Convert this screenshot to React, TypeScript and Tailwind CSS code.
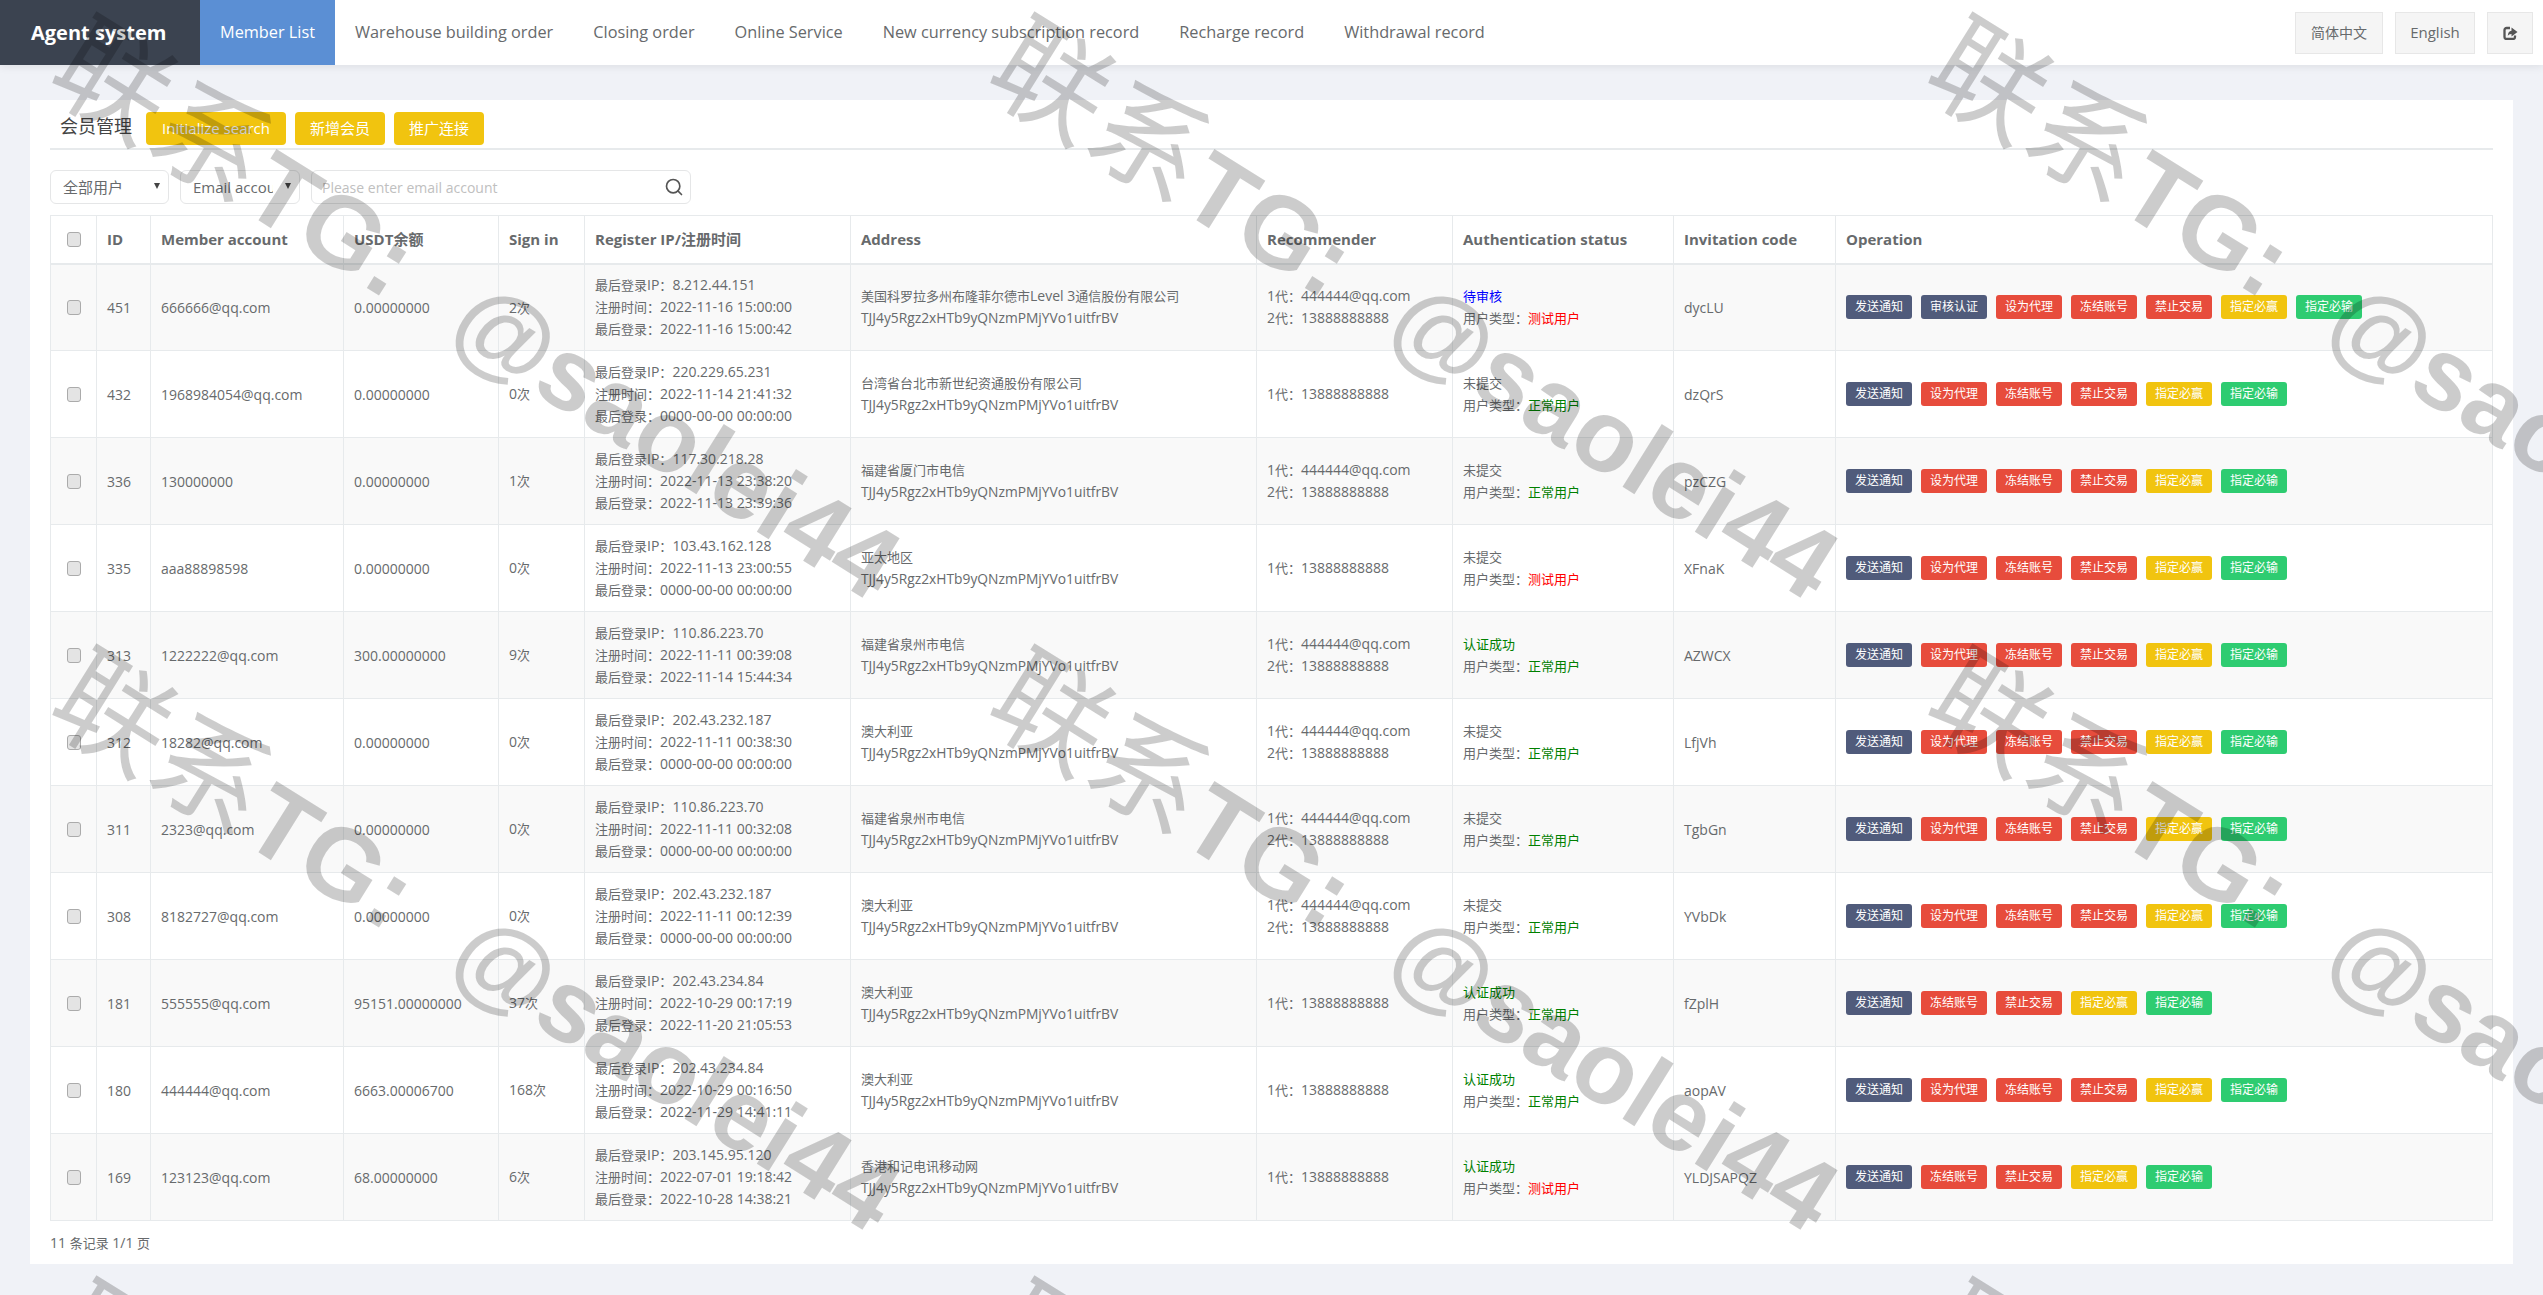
import React from 'react';
import { Search } from 'lucide-react';

const FONT = "font-['Open_Sans','Noto_Sans_CJK_SC',sans-serif]";

type Row = {
  id: number;
  account: string;
  usdt: string;
  sign: string;
  ip: string;
  reg: string;
  last: string;
  addr: string;
  rec: string[];
  auth: 'wait' | 'none' | 'ok';
  test: boolean;
  code: string;
  ops: string[];
};

const normal = ['发送通知', '设为代理', '冻结账号', '禁止交易', '指定必赢', '指定必输'];
const noAgent = ['发送通知', '冻结账号', '禁止交易', '指定必赢', '指定必输'];

const rows: Row[] = [
  { id: 451, account: '666666@qq.com', usdt: '0.00000000', sign: '2次', ip: '8.212.44.151', reg: '2022-11-16 15:00:00', last: '2022-11-16 15:00:42', addr: '美国科罗拉多州布隆菲尔德市Level 3通信股份有限公司', rec: ['1代：444444@qq.com', '2代：13888888888'], auth: 'wait', test: true, code: 'dycLU', ops: ['发送通知', '审核认证', '设为代理', '冻结账号', '禁止交易', '指定必赢', '指定必输'] },
  { id: 432, account: '1968984054@qq.com', usdt: '0.00000000', sign: '0次', ip: '220.229.65.231', reg: '2022-11-14 21:41:32', last: '0000-00-00 00:00:00', addr: '台湾省台北市新世纪资通股份有限公司', rec: ['1代：13888888888'], auth: 'none', test: false, code: 'dzQrS', ops: normal },
  { id: 336, account: '130000000', usdt: '0.00000000', sign: '1次', ip: '117.30.218.28', reg: '2022-11-13 23:38:20', last: '2022-11-13 23:39:36', addr: '福建省厦门市电信', rec: ['1代：444444@qq.com', '2代：13888888888'], auth: 'none', test: false, code: 'pzCZG', ops: normal },
  { id: 335, account: 'aaa88898598', usdt: '0.00000000', sign: '0次', ip: '103.43.162.128', reg: '2022-11-13 23:00:55', last: '0000-00-00 00:00:00', addr: '亚太地区', rec: ['1代：13888888888'], auth: 'none', test: true, code: 'XFnaK', ops: normal },
  { id: 313, account: '1222222@qq.com', usdt: '300.00000000', sign: '9次', ip: '110.86.223.70', reg: '2022-11-11 00:39:08', last: '2022-11-14 15:44:34', addr: '福建省泉州市电信', rec: ['1代：444444@qq.com', '2代：13888888888'], auth: 'ok', test: false, code: 'AZWCX', ops: normal },
  { id: 312, account: '18282@qq.com', usdt: '0.00000000', sign: '0次', ip: '202.43.232.187', reg: '2022-11-11 00:38:30', last: '0000-00-00 00:00:00', addr: '澳大利亚', rec: ['1代：444444@qq.com', '2代：13888888888'], auth: 'none', test: false, code: 'LfjVh', ops: normal },
  { id: 311, account: '2323@qq.com', usdt: '0.00000000', sign: '0次', ip: '110.86.223.70', reg: '2022-11-11 00:32:08', last: '0000-00-00 00:00:00', addr: '福建省泉州市电信', rec: ['1代：444444@qq.com', '2代：13888888888'], auth: 'none', test: false, code: 'TgbGn', ops: normal },
  { id: 308, account: '8182727@qq.com', usdt: '0.00000000', sign: '0次', ip: '202.43.232.187', reg: '2022-11-11 00:12:39', last: '0000-00-00 00:00:00', addr: '澳大利亚', rec: ['1代：444444@qq.com', '2代：13888888888'], auth: 'none', test: false, code: 'YVbDk', ops: normal },
  { id: 181, account: '555555@qq.com', usdt: '95151.00000000', sign: '37次', ip: '202.43.234.84', reg: '2022-10-29 00:17:19', last: '2022-11-20 21:05:53', addr: '澳大利亚', rec: ['1代：13888888888'], auth: 'ok', test: false, code: 'fZplH', ops: noAgent },
  { id: 180, account: '444444@qq.com', usdt: '6663.00006700', sign: '168次', ip: '202.43.234.84', reg: '2022-10-29 00:16:50', last: '2022-11-29 14:41:11', addr: '澳大利亚', rec: ['1代：13888888888'], auth: 'ok', test: false, code: 'aopAV', ops: normal },
  { id: 169, account: '123123@qq.com', usdt: '68.00000000', sign: '6次', ip: '203.145.95.120', reg: '2022-07-01 19:18:42', last: '2022-10-28 14:38:21', addr: '香港和记电讯移动网', rec: ['1代：13888888888'], auth: 'ok', test: true, code: 'YLDJSAPQZ', ops: noAgent },
];

const navItems = ['Warehouse building order', 'Closing order', 'Online Service', 'New currency subscription record', 'Recharge record', 'Withdrawal record'];

function opColor(label: string) {
  if (label === '发送通知' || label === '审核认证') return 'bg-[#505b7b]';
  if (label === '指定必赢') return 'bg-[#f1c40f]';
  if (label === '指定必输') return 'bg-[#2ecc71]';
  return 'bg-[#e74c3c]';
}

// the cells run latin at 14px and chinese at 13px
function Mix({ text }: { text: string }) {
  const parts = text.split(/([\u3000-\u9fff\uff00-\uffef]+)/);
  return (
    <>
      {parts.map((p, i) => (i % 2 === 1 ? <span key={i} className="text-[13px]">{p}</span> : p))}
    </>
  );
}

function Check() {
  return <input type="checkbox" className="block h-[15px] w-[14px] appearance-none rounded-[3px] border border-[#ababab] bg-[#e4e4e4]" />;
}

function SelectBox({ label, width }: { label: string; width: string }) {
  return (
    <div className={`relative h-[34px] ${width}`}>
      <select className="h-[34px] w-full appearance-none rounded-[6px] border border-[#e5e6e7] bg-white pl-[12px] pr-[26px] text-[15px] outline-none">
        <option>{label}</option>
      </select>
      <span className="pointer-events-none absolute right-[9px] top-[13px] h-0 w-0 border-x-[3px] border-t-[6px] border-x-transparent border-t-[#444]" />
    </div>
  );
}

function ExitIcon() {
  return (
    <svg viewBox="0 0 15 14" className="h-[14px] w-[15px] text-[#555]">
      <path d="M7 2H3.6A2.1 2.1 0 0 0 1.5 4.1v6.8A2.1 2.1 0 0 0 3.6 13h6.3A2.1 2.1 0 0 0 12 10.9V9.5" fill="none" stroke="currentColor" strokeWidth="2.3" />
      <path d="M8.5 1.5 14.5 6 8.5 10.5V8C6.5 8 5.4 8.8 4.8 10 4.8 7.2 6.2 4.9 8.5 4.8Z" fill="currentColor" />
    </svg>
  );
}

function Watermark() {
  const tiles = Array.from({ length: 12 });
  return (
    <div className="pointer-events-none absolute inset-0 overflow-hidden">
      <div className="grid w-[3752px] grid-cols-[repeat(4,938px)] auto-rows-[632px]">
        {tiles.map((_, i) => (
          <div key={i} className="relative h-[632px] w-[938px]">
            <div className="absolute left-[478px] top-[311px] -translate-x-1/2 -translate-y-1/2 rotate-[32deg] whitespace-nowrap text-[102px] leading-none text-black/20 font-bold [word-spacing:40px] font-['Liberation_Sans','Noto_Sans_CJK_SC',sans-serif]">
              <span className="text-[115px] font-normal">联系</span>TG: @saolei44
            </div>
          </div>
        ))}
      </div>
    </div>
  );
}

const thClass = 'border border-[#e7eaec] border-b-2 px-[10px] text-left align-middle text-[15px] font-bold text-[#676a6c]';
const tdClass = 'h-[87px] border border-[#e7eaec] px-[10px] py-0 align-middle';

export default function App() {
  return (
    <div className={`relative h-[1295px] w-full overflow-hidden bg-[#f0f2f7] text-[14px] text-[#676a6c] ${FONT}`}>
      <div className="flex h-[65px] items-stretch bg-white shadow-[0_2px_8px_rgba(0,0,0,0.08)]">
        <div className="flex w-[200px] items-center bg-[#3b4350] pl-[31px] text-[20px] font-bold text-white">Agent system</div>
        <div className="flex w-[135px] items-center justify-center bg-[#5b8fd4] text-[16.3px] text-white">Member List</div>
        {navItems.map((n) => (
          <div key={n} className="flex items-center px-[20px] text-[16.3px] text-[#676a6c]">{n}</div>
        ))}
        <div className="ml-auto flex items-center gap-[12px] pr-[10px] text-[15px]">
          <div className="flex h-[42px] w-[88px] items-center justify-center border border-[#e7e7e7] bg-[#f5f5f5] text-[14px]">简体中文</div>
          <div className="flex h-[42px] w-[80px] items-center justify-center border border-[#e7e7e7] bg-[#f5f5f5]">English</div>
          <div className="flex h-[42px] w-[46px] items-center justify-center border border-[#e7e7e7] bg-[#f5f5f5]"><ExitIcon /></div>
        </div>
      </div>

      <div className="mx-[30px] mt-[35px] bg-white px-[20px] pt-[12px]">
        <div className="flex h-[38px] items-start gap-[9px] border-b-2 border-[#e7eaec]">
          <h5 className="ml-[10px] mr-[5px] text-[18px] leading-[28px] font-normal text-[#444]">会员管理</h5>
          <button className="h-[33px] w-[140px] rounded-[4px] bg-[#f1c40f] text-[15px] text-white">Initialize search</button>
          <button className="h-[33px] w-[90px] rounded-[4px] bg-[#f1c40f] text-[15px] text-white">新增会员</button>
          <button className="h-[33px] w-[90px] rounded-[4px] bg-[#f1c40f] text-[15px] text-white">推广连接</button>
        </div>

        <div className="mt-[20px] flex h-[34px] gap-[11px]">
          <SelectBox label="全部用户" width="w-[119px]" />
          <SelectBox label="Email account" width="w-[120px]" />
          <div className="flex h-[34px] w-[380px] items-center rounded-[6px] border border-[#e5e6e7] pl-[10px] pr-[6px]">
            <input placeholder="Please enter email account" className="min-w-0 flex-1 text-[14px] outline-none placeholder:text-[#c0c0c0]" />
            <Search className="h-[20px] w-[20px] text-[#555]" />
          </div>
        </div>

        <table className="mt-[11px] w-full table-fixed border-collapse">
          <colgroup>
            <col className="w-[46px]" />
            <col className="w-[54px]" />
            <col className="w-[193px]" />
            <col className="w-[155px]" />
            <col className="w-[86px]" />
            <col className="w-[266px]" />
            <col className="w-[406px]" />
            <col className="w-[196px]" />
            <col className="w-[221px]" />
            <col className="w-[162px]" />
            <col />
          </colgroup>
          <thead>
            <tr className="h-[48px]">
              <th className={thClass}><div className="flex justify-center"><Check /></div></th>
              <th className={thClass}>ID</th>
              <th className={thClass}>Member account</th>
              <th className={thClass}>USDT余额</th>
              <th className={thClass}>Sign in</th>
              <th className={thClass}>Register IP/注册时间</th>
              <th className={thClass}>Address</th>
              <th className={thClass}>Recommender</th>
              <th className={thClass}>Authentication status</th>
              <th className={thClass}>Invitation code</th>
              <th className={thClass}>Operation</th>
            </tr>
          </thead>
          <tbody>
            {rows.map((r, i) => (
              <tr key={r.id} className={i % 2 === 0 ? 'bg-[#f9f9f9]' : 'bg-white'}>
                <td className={tdClass}><div className="flex justify-center"><Check /></div></td>
                <td className={tdClass}>{r.id}</td>
                <td className={tdClass}>{r.account}</td>
                <td className={tdClass}>{r.usdt}</td>
                <td className={tdClass}><Mix text={r.sign} /></td>
                <td className={`${tdClass} leading-[22px]`}>
                  <div><Mix text={`最后登录IP：${r.ip}`} /></div>
                  <div><Mix text={`注册时间：${r.reg}`} /></div>
                  <div><Mix text={`最后登录：${r.last}`} /></div>
                </td>
                <td className={`${tdClass} leading-[22px]`}>
                  <div><Mix text={r.addr} /></div>
                  <div className="text-[13.8px]">TJJ4y5Rgz2xHTb9yQNzmPMjYVo1uitfrBV</div>
                </td>
                <td className={`${tdClass} leading-[22px]`}>
                  {r.rec.map((x) => <div key={x}><Mix text={x} /></div>)}
                </td>
                <td className={`${tdClass} text-[13px] leading-[22px]`}>
                  {r.auth === 'wait' && <div className="text-[#0000ff]">待审核</div>}
                  {r.auth === 'none' && <div>未提交</div>}
                  {r.auth === 'ok' && <div className="text-[#008000]">认证成功</div>}
                  <div>用户类型：<span className={r.test ? 'text-[#ff0000]' : 'text-[#008000]'}>{r.test ? '测试用户' : '正常用户'}</span></div>
                </td>
                <td className={tdClass}>{r.code}</td>
                <td className={tdClass}>
                  <div className="flex gap-[9px]">
                    {r.ops.map((o) => (
                      <span key={o} className={`flex h-[24px] w-[66px] items-center justify-center rounded-[3px] text-[12px] text-white ${opColor(o)}`}>{o}</span>
                    ))}
                  </div>
                </td>
              </tr>
            ))}
          </tbody>
        </table>

        <div className="flex h-[43px] items-center"><span><Mix text="11 条记录 1/1 页" /></span></div>
      </div>
      <Watermark />
    </div>
  );
}
